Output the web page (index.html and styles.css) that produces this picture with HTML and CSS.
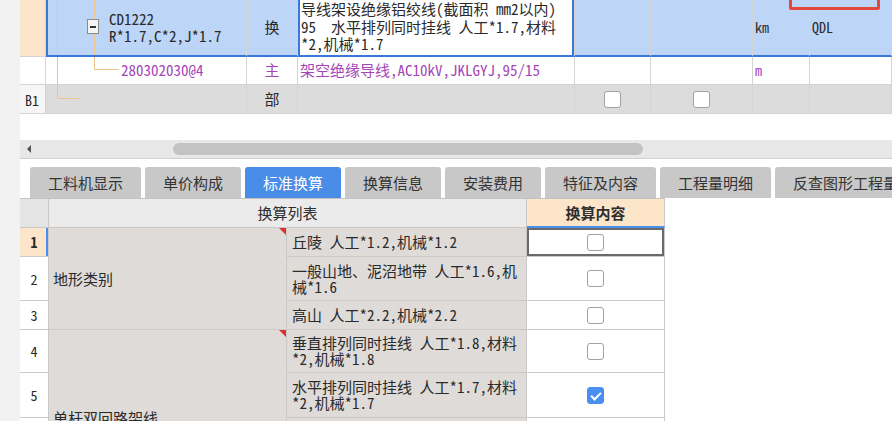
FILE: index.html
```html
<!DOCTYPE html>
<html lang="zh-CN">
<head>
<meta charset="utf-8">
<title>标准换算</title>
<link rel="stylesheet" href="styles.css">
</head>
<body>
<div class="app">
  <div class="side"></div>
  <div class="main">
    <div class="mark"></div>

    <div class="sheet">
      <div class="cell num num-sel"></div>
      <div class="cell code sel sel-start">
        <span class="tl tl-v1"></span>
        <span class="tl tl-v2"></span>
        <span class="toggle"></span>
        <span class="code-text">CD1222
R*1.7,C*2,J*1.7</span>
      </div>
      <div class="cell type sel">换</div>
      <div class="cell desc active">导线架设绝缘铝绞线(截面积 mm2以内)
95  水平排列同时挂线 人工*1.7,材料
*2,机械*1.7</div>
      <div class="cell sel"></div>
      <div class="cell sel"></div>
      <div class="cell unit sel">km</div>
      <div class="cell unit sel">QDL</div>

      <div class="cell num"></div>
      <div class="cell code code-sub">
        <span class="tl tl-v1"></span>
        <span class="tl tl-l2"></span>
        <span class="code-text purple">280302030@4</span>
      </div>
      <div class="cell type purple">主</div>
      <div class="cell text purple">架空绝缘导线,AC10kV,JKLGYJ,95/15</div>
      <div class="cell"></div>
      <div class="cell"></div>
      <div class="cell unit purple">m</div>
      <div class="cell"></div>

      <div class="cell num num-b">B1</div>
      <div class="cell code grey"><span class="tl tl-l1"></span></div>
      <div class="cell type grey">部</div>
      <div class="cell grey"></div>
      <div class="cell grey center"><span class="chk"></span></div>
      <div class="cell grey center"><span class="chk"></span></div>
      <div class="cell grey"></div>
      <div class="cell grey"></div>
    </div>

    <div class="hscroll">
      <span class="arrow-left"></span>
      <span class="thumb"></span>
    </div>

    <div class="tabs">
      <div class="tab">工料机显示</div>
      <div class="tab">单价构成</div>
      <div class="tab active">标准换算</div>
      <div class="tab">换算信息</div>
      <div class="tab">安装费用</div>
      <div class="tab">特征及内容</div>
      <div class="tab">工程量明细</div>
      <div class="tab">反查图形工程量</div>
    </div>

    <div class="conv">
      <div class="h h-num"></div>
      <div class="h h-list">换算列表</div>
      <div class="h h-content">换算内容</div>

      <div class="rn rn-sel">1</div>
      <div class="cat cat-1">地形类别</div>
      <div class="item">丘陵 人工*1.2,机械*1.2</div>
      <div class="val val-sel"><span class="chk"></span></div>

      <div class="rn">2</div>
      <div class="item">一般山地、泥沼地带 人工*1.6,机
械*1.6</div>
      <div class="val"><span class="chk"></span></div>

      <div class="rn">3</div>
      <div class="item">高山 人工*2.2,机械*2.2</div>
      <div class="val"><span class="chk"></span></div>

      <div class="rn">4</div>
      <div class="cat cat-2">单杆双回路架线</div>
      <div class="item">垂直排列同时挂线 人工*1.8,材料
*2,机械*1.8</div>
      <div class="val"><span class="chk"></span></div>

      <div class="rn">5</div>
      <div class="item">水平排列同时挂线 人工*1.7,材料
*2,机械*1.7</div>
      <div class="val"><span class="chk checked"></span></div>

      <div class="rn">6</div>
      <div class="item">单根挂线 人工*1.0</div>
      <div class="val"><span class="chk"></span></div>

      <div class="rn">7</div>
      <div class="item">其他</div>
      <div class="val"><span class="chk"></span></div>
    </div>
  </div>
</div>
</body>
</html>
```

FILE: styles.css
```css
* {
  box-sizing: border-box;
  margin: 0;
  padding: 0;
}

html,
body {
  width: 892px;
  height: 421px;
  overflow: hidden;
  background: #ffffff;
}

body {
  font-family: "Noto Sans Mono CJK SC", "Noto Sans CJK SC", sans-serif;
  font-size: 15px;
  color: #2a2a2a;
}

.app {
  display: flex;
  height: 421px;
}

.side {
  width: 20px;
  flex-shrink: 0;
  background: #f2f2f2;
}

.main {
  flex: 1;
  position: relative;
  overflow: hidden;
  display: flex;
  flex-direction: column;
  background: #ffffff;
}

/* red annotation box at the top right */
.mark {
  position: absolute;
  left: 769px;
  top: -12px;
  width: 91px;
  height: 22px;
  border: 3px solid #e4473b;
  border-radius: 2px;
  z-index: 5;
}

/* ---------- upper sheet ---------- */
.sheet {
  display: grid;
  grid-template-columns: 26px 201px 51px 277px 76px 102px 57px 1fr;
  grid-template-rows: 60px 28px 29px;
  margin-top: -3px;
  flex-shrink: 0;
}

.cell {
  position: relative;
  display: flex;
  align-items: center;
  border-right: 1px solid #d4d4d4;
  border-bottom: 1px solid #d4d4d4;
  line-height: 16.5px;
  white-space: pre;
  overflow: hidden;
  background: #ffffff;
}

.num {
  padding-left: 5px;
  font-size: 14px;
}

.num-sel {
  background: #fde5cc;
}

.num-b {
  background: #f6f6f6;
  padding-top: 2px;
}

.sel {
  background: #bdd5f6;
  border-bottom: 2px solid #3a78d8;
  padding-top: 3px;
}

.sel-start {
  box-shadow: inset 2px 0 0 #3a78d8;
}

.code {
  padding-left: 41px;
  gap: 10px;
}

.code-sub {
  padding-left: 75px;
}

.code-text {
  position: relative;
  z-index: 1;
}

.toggle {
  position: relative;
  z-index: 1;
  width: 12px;
  height: 15px;
  border: 1px solid #8b8b8b;
  background: #f4f4f4;
  flex-shrink: 0;
  margin-top: -2px;
}

.toggle::after {
  content: "";
  position: absolute;
  left: 2px;
  right: 2px;
  top: 6px;
  height: 2px;
  background: #333333;
}

.tl {
  position: absolute;
  border-color: #eec48e;
  border-style: solid;
  border-width: 0;
}

.tl-v1 {
  left: 11px;
  top: 0;
  bottom: 0;
  border-left-width: 1px;
}

.tl-v2 {
  left: 48px;
  top: 0;
  bottom: 0;
  border-left-width: 1px;
}

.tl-l2 {
  left: 48px;
  top: 0;
  width: 25px;
  height: 13px;
  border-left-width: 1px;
  border-bottom-width: 1px;
}

.tl-l1 {
  left: 11px;
  top: 0;
  width: 22px;
  height: 14px;
  border-left-width: 1px;
  border-bottom-width: 1px;
}

.type {
  justify-content: center;
}

.desc {
  align-items: flex-start;
  padding: 3px 0 0 3px;
  line-height: 17.5px;
  background: #ffffff;
  border-bottom: 2px solid #3a78d8;
  box-shadow: inset 2px 0 0 #3a78d8, inset -2px 0 0 #3a78d8;
}

.text {
  padding-left: 2px;
}

.unit {
  padding-left: 2px;
  font-size: 14px;
}

.purple {
  color: #a546b8;
}

.grey {
  background: #dcdcdc;
}

.center {
  justify-content: center;
}

.chk {
  display: inline-block;
  width: 17px;
  height: 17px;
  border: 1px solid #a2a2a2;
  border-radius: 3px;
  background: #ffffff;
  position: relative;
}

.chk.checked {
  background: #4a8ef0;
  border-color: #4a8ef0;
}

.chk.checked::after {
  content: "";
  position: absolute;
  left: 5px;
  top: 2px;
  width: 4px;
  height: 8px;
  border: solid #ffffff;
  border-width: 0 2px 2px 0;
  transform: rotate(45deg);
}

/* ---------- horizontal scrollbar ---------- */
.hscroll {
  flex-shrink: 0;
  margin-top: 26px;
  height: 19px;
  background: #e7e7e7;
  border-bottom: 1px solid #cfcfcf;
  display: flex;
  align-items: center;
}

.arrow-left {
  margin-left: 7px;
  width: 0;
  height: 0;
  border-top: 4px solid transparent;
  border-bottom: 4px solid transparent;
  border-right: 4px solid #555555;
}

.thumb {
  margin-left: 142px;
  width: 470px;
  height: 12px;
  border-radius: 6px;
  background: #c3c3c3;
}

/* ---------- tabs ---------- */
.tabs {
  flex-shrink: 0;
  margin-top: 8px;
  padding-left: 10px;
  display: flex;
  gap: 4px;
  height: 31px;
  overflow: hidden;
  font-family: "Noto Sans CJK SC", sans-serif;
}

.tab {
  flex-shrink: 0;
  padding: 0 18px;
  display: flex;
  align-items: center;
  background: #c8c8c8;
  color: #333333;
  border-radius: 3px 3px 0 0;
  font-size: 15px;
}

.tab.active {
  background: #4a8de8;
  color: #ffffff;
}

/* ---------- conversion list ---------- */
.conv {
  flex-shrink: 0;
  display: grid;
  grid-template-columns: 29px 238px 240px 138px;
  grid-template-rows: 29px 29px 44px 29px 43px 45px 44px 44px;
  width: 645px;
  border-top: 1px solid #c3c3c3;
}

.conv > div {
  border-right: 1px solid #c9c9c9;
  border-bottom: 1px solid #c9c9c9;
  display: flex;
  align-items: center;
  position: relative;
  white-space: pre;
  line-height: 16px;
}

.h {
  background: #ebebeb;
  justify-content: center;
  color: #2e2e2e;
}

.h-num {
  background: #e4e4e4;
}

.h-list {
  grid-column: 2 / 4;
}

.h-content {
  background: #fde5ca;
  font-weight: bold;
  border-bottom: 2px solid #4a8ef0 !important;
}

.rn {
  justify-content: center;
  font-size: 14px;
  background: #ffffff;
}

.rn-sel {
  background: #fde5cc;
  font-weight: bold;
  box-shadow: inset -2px 0 0 #4a8ef0;
}

.cat {
  background: #dedbd8;
  padding-left: 4px;
}

.cat::after {
  content: "";
  position: absolute;
  top: 0;
  right: 0;
  border-top: 7px solid #e0302b;
  border-left: 7px solid transparent;
}

.cat-1 {
  grid-column: 2;
  grid-row: 2 / 5;
}

.cat-2 {
  grid-column: 2;
  grid-row: 5 / 9;
}

.item {
  grid-column: 3;
  background: #dedbd8;
  padding-left: 5px;
}

.val {
  grid-column: 4;
  justify-content: center;
  background: #ffffff;
}

.val-sel {
  box-shadow: inset 0 0 0 2px #6a6a6a;
}
```
